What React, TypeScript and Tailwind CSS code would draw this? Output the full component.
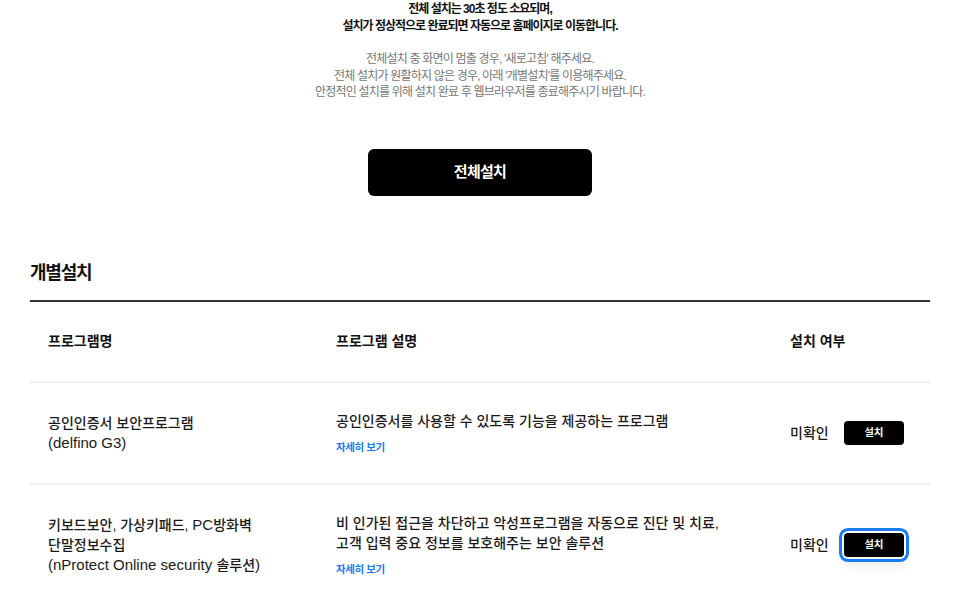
import React from "react";

const L = ({ children }: { children: React.ReactNode }) => (
  <span className="text-[15px] tracking-normal">{children}</span>
);

function Row({
  name,
  desc,
  focused,
}: {
  name: React.ReactNode;
  desc: React.ReactNode;
  focused?: boolean;
}) {
  return (
    <div className="grid grid-cols-[288px_454px_1fr] items-center border-b-2 border-[#efefef] py-[28.5px] text-[#1a1a1a]">
      <div className="pl-[18px] text-[14px] leading-[20px] font-medium">{name}</div>
      <div className="pl-[18px]">
        <div className="text-[14px] leading-[20px] font-medium">{desc}</div>
        <div className="mt-[9px] text-[10.5px] leading-[14px] font-bold tracking-[-0.4px] text-[#157cf3]">
          자세히 보기
        </div>
      </div>
      <div className="pl-[18px] flex items-center gap-[15px]">
        <span className="text-[14px] leading-[20px] font-medium">미확인</span>
        <button
          className={
            focused
              ? "w-[60px] h-[24px] rounded-[4px] bg-black text-white text-[10.5px] font-bold tracking-[-0.3px] ring-[3px] ring-[#1a7cf4] ring-offset-2 ring-offset-white shadow-[0_6px_14px_rgba(0,0,0,0.12)]"
              : "w-[60px] h-[24px] rounded-[4px] bg-black text-white text-[10.5px] font-bold tracking-[-0.3px]"
          }
        >
          설치
        </button>
      </div>
    </div>
  );
}

export default function App() {
  return (
    <div className="w-[960px] h-[600px] overflow-hidden bg-white text-[#111] [font-family:'Liberation_Sans','Noto_Sans_CJK_KR',sans-serif]">
      <div className="mx-[30px] w-[900px] pt-[1px]">
        <div className="text-center text-[12px] leading-[16.5px] font-bold tracking-[-1px] text-[#111]">
          <p>전체 설치는 30초 정도 소요되며,</p>
          <p>설치가 정상적으로 완료되면 자동으로 홈페이지로 이동합니다.</p>
        </div>
        <div className="mt-[17px] text-center text-[12px] leading-[16.5px] tracking-[-0.8px] text-[#767676]">
          <p>전체설치 중 화면이 멈출 경우, '새로고침' 해주세요.</p>
          <p>전체 설치가 원활하지 않은 경우, 아래 '개별설치'를 이용해주세요.</p>
          <p>안정적인 설치를 위해 설치 완료 후 웹브라우저를 종료해주시기 바랍니다.</p>
        </div>
        <div className="mt-[48px] flex justify-center">
          <button className="w-[224px] h-[47px] rounded-[6px] bg-black text-white text-[15px] font-bold tracking-[-0.7px]">
            전체설치
          </button>
        </div>
        <h2 className="mt-[65px] text-[18px] leading-[24px] font-bold tracking-[-1.2px] pb-[15px] border-b-2 border-[#333] text-[#111]">
          개별설치
        </h2>
        <div className="grid grid-cols-[288px_454px_1fr] items-center h-[81px] border-b-2 border-[#efefef] text-[14px] font-bold text-[#111]">
          <div className="pl-[18px]">프로그램명</div>
          <div className="pl-[18px]">프로그램 설명</div>
          <div className="pl-[18px]">설치 여부</div>
        </div>
        <Row
          name={
            <>
              <p>공인인증서 보안프로그램</p>
              <p>
                <L>(delfino G3)</L>
              </p>
            </>
          }
          desc={<p>공인인증서를 사용할 수 있도록 기능을 제공하는 프로그램</p>}
        />
        <Row
          focused
          name={
            <>
              <p>
                키보드보안, 가상키패드, <L>PC</L>방화벽
              </p>
              <p>단말정보수집</p>
              <p>
                <L>(nProtect Online security </L>솔루션<L>)</L>
              </p>
            </>
          }
          desc={
            <>
              <p>비 인가된 접근을 차단하고 악성프로그램을 자동으로 진단 및 치료,</p>
              <p>고객 입력 중요 정보를 보호해주는 보안 솔루션</p>
            </>
          }
        />
      </div>
    </div>
  );
}
